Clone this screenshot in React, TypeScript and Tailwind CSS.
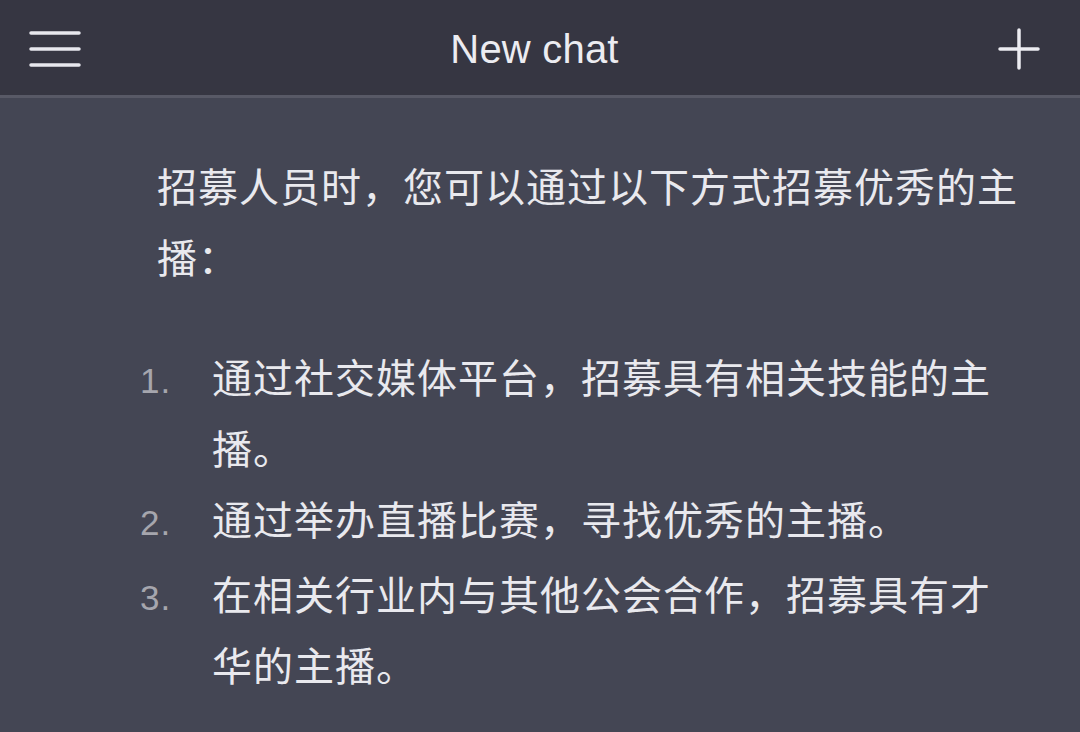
const intro = "招募人员时，您可以通过以下方式招募优秀的主播：";

const items = [
  "通过社交媒体平台，招募具有相关技能的主播。",
  "通过举办直播比赛，寻找优秀的主播。",
  "在相关行业内与其他公会合作，招募具有才华的主播。",
];

const cjk = "font-['Noto_Sans_CJK_SC',sans-serif]";

const MenuIcon = () => (
  <svg width="52" height="40" viewBox="0 0 52 40" fill="none">
    <path d="M2 4h48M2 20h48M2 36h48" stroke="#e8e8ee" strokeWidth="3.5" strokeLinecap="round" />
  </svg>
);

const PlusIcon = () => (
  <svg width="42" height="42" viewBox="0 0 42 42" fill="none">
    <path d="M21 2v38M2 21h38" stroke="#ececf1" strokeWidth="3.5" strokeLinecap="round" />
  </svg>
);

export default function App() {
  return (
    <div className="w-[1080px] h-[732px] overflow-hidden bg-[#444654] flex flex-col">
      <header className="h-[98px] shrink-0 bg-[#363642] border-b-[3px] border-[#585966] flex items-center justify-between pl-[29px] pr-[40px] pt-[2px]">
        <MenuIcon />
        <span className="text-[40px] text-[#ececf1] font-['Liberation_Sans',sans-serif] tracking-[0.2px] pr-[10px]">
          New chat
        </span>
        <PlusIcon />
      </header>

      <main className={`${cjk} text-[#e9e9ee] text-[40px] leading-[71px] tracking-[1px] pl-[157px] pr-[50px] pt-[52px]`}>
        <p className="w-[870px]">{intro}</p>
        <ol className="mt-[49px]">
          {items.map((text, i) => (
            <li key={i} className="flex items-baseline">
              <span className="w-[73px] shrink-0 -ml-[18px] pl-[1px] text-[#a6a6ae] text-[35px] font-['Liberation_Sans',sans-serif]">
                {i + 1}.
              </span>
              <span className="w-[820px]">{text}</span>
            </li>
          ))}
        </ol>
      </main>
    </div>
  );
}
